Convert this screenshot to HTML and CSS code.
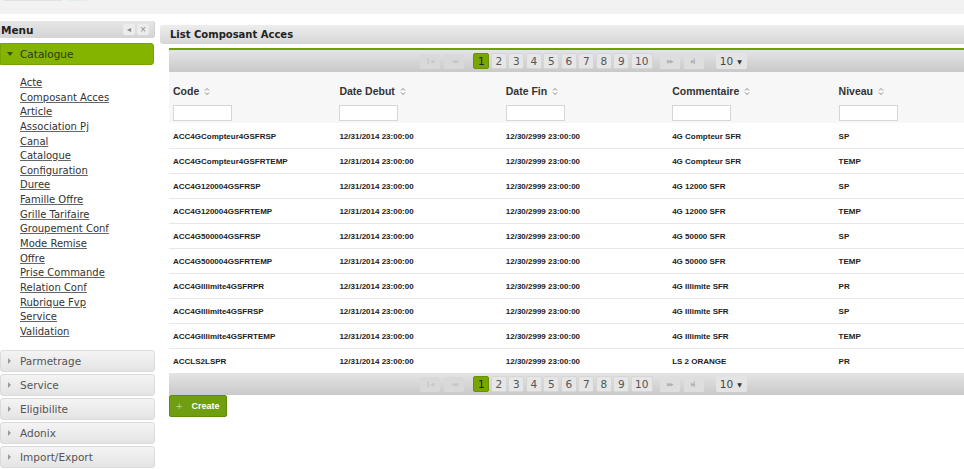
FILE: index.html
```html
<!DOCTYPE html>
<html>
<head>
<meta charset="utf-8">
<link rel="stylesheet" href="styles.css">
</head>
<body>
<div class="topbar"><span class="ghost g1"></span><span class="ghost g2"></span></div>
<div class="layout">
  <aside class="sidebar">
    <div class="menu-head">
      <span class="menu-title">Menu</span>
      <span class="menu-tools"><span class="tool">&#9666;</span><span class="tool">&#215;</span></span>
    </div>
    <div class="acc-open"><span class="tri-down"></span>Catalogue</div>
    <ul class="links">
      <li><a>Acte</a></li>
      <li><a>Composant Acces</a></li>
      <li><a>Article</a></li>
      <li><a>Association Pj</a></li>
      <li><a>Canal</a></li>
      <li><a>Catalogue</a></li>
      <li><a>Configuration</a></li>
      <li><a>Duree</a></li>
      <li><a>Famille Offre</a></li>
      <li><a>Grille Tarifaire</a></li>
      <li><a>Groupement Conf</a></li>
      <li><a>Mode Remise</a></li>
      <li><a>Offre</a></li>
      <li><a>Prise Commande</a></li>
      <li><a>Relation Conf</a></li>
      <li><a>Rubrique Fvp</a></li>
      <li><a>Service</a></li>
      <li><a>Validation</a></li>
    </ul>
    <div class="acc"><span class="tri-right"></span>Parmetrage</div>
    <div class="acc"><span class="tri-right"></span>Service</div>
    <div class="acc"><span class="tri-right"></span>Eligibilite</div>
    <div class="acc"><span class="tri-right"></span>Adonix</div>
    <div class="acc"><span class="tri-right"></span>Import/Export</div>
  </aside>
  <main class="main">
    <div class="panel-head">List Composant Acces</div>
    <div class="content">
      <div class="datatable">
        <div class="pager top">
          <span class="pbtn dis">&#9614;&#9664;</span><span class="pbtn dis">&#9664;&#9664;</span>
          <span class="pages"><span class="pg on">1</span><span class="pg">2</span><span class="pg">3</span><span class="pg">4</span><span class="pg">5</span><span class="pg">6</span><span class="pg">7</span><span class="pg">8</span><span class="pg">9</span><span class="pg wide">10</span></span>
          <span class="pbtn">&#9654;&#9654;</span><span class="pbtn">&#9654;&#9614;</span>
          <span class="rows">10 <span class="caret">&#9660;</span></span>
        </div>
        <table>
          <thead>
            <tr>
              <th><div class="th">Code <svg class="sort" viewBox="0 0 6 9" width="6" height="9"><path d="M1 3.5 L3 1.5 L5 3.5 M1 5.5 L3 7.5 L5 5.5" fill="none" stroke="#8a8a8a" stroke-width="1"/></svg></div><span class="filter"></span></th>
              <th><div class="th">Date Debut <svg class="sort" viewBox="0 0 6 9" width="6" height="9"><path d="M1 3.5 L3 1.5 L5 3.5 M1 5.5 L3 7.5 L5 5.5" fill="none" stroke="#8a8a8a" stroke-width="1"/></svg></div><span class="filter"></span></th>
              <th><div class="th">Date Fin <svg class="sort" viewBox="0 0 6 9" width="6" height="9"><path d="M1 3.5 L3 1.5 L5 3.5 M1 5.5 L3 7.5 L5 5.5" fill="none" stroke="#8a8a8a" stroke-width="1"/></svg></div><span class="filter"></span></th>
              <th><div class="th">Commentaire <svg class="sort" viewBox="0 0 6 9" width="6" height="9"><path d="M1 3.5 L3 1.5 L5 3.5 M1 5.5 L3 7.5 L5 5.5" fill="none" stroke="#8a8a8a" stroke-width="1"/></svg></div><span class="filter"></span></th>
              <th><div class="th">Niveau <svg class="sort" viewBox="0 0 6 9" width="6" height="9"><path d="M1 3.5 L3 1.5 L5 3.5 M1 5.5 L3 7.5 L5 5.5" fill="none" stroke="#8a8a8a" stroke-width="1"/></svg></div><span class="filter"></span></th>
            </tr>
          </thead>
          <tbody>
            <tr><td>ACC4GCompteur4GSFRSP</td><td>12/31/2014 23:00:00</td><td>12/30/2999 23:00:00</td><td>4G Compteur SFR</td><td>SP</td></tr>
            <tr><td>ACC4GCompteur4GSFRTEMP</td><td>12/31/2014 23:00:00</td><td>12/30/2999 23:00:00</td><td>4G Compteur SFR</td><td>TEMP</td></tr>
            <tr><td>ACC4G120004GSFRSP</td><td>12/31/2014 23:00:00</td><td>12/30/2999 23:00:00</td><td>4G 12000 SFR</td><td>SP</td></tr>
            <tr><td>ACC4G120004GSFRTEMP</td><td>12/31/2014 23:00:00</td><td>12/30/2999 23:00:00</td><td>4G 12000 SFR</td><td>TEMP</td></tr>
            <tr><td>ACC4G500004GSFRSP</td><td>12/31/2014 23:00:00</td><td>12/30/2999 23:00:00</td><td>4G 50000 SFR</td><td>SP</td></tr>
            <tr><td>ACC4G500004GSFRTEMP</td><td>12/31/2014 23:00:00</td><td>12/30/2999 23:00:00</td><td>4G 50000 SFR</td><td>TEMP</td></tr>
            <tr><td>ACC4GIllimite4GSFRPR</td><td>12/31/2014 23:00:00</td><td>12/30/2999 23:00:00</td><td>4G Illimite SFR</td><td>PR</td></tr>
            <tr><td>ACC4GIllimite4GSFRSP</td><td>12/31/2014 23:00:00</td><td>12/30/2999 23:00:00</td><td>4G Illimite SFR</td><td>SP</td></tr>
            <tr><td>ACC4GIllimite4GSFRTEMP</td><td>12/31/2014 23:00:00</td><td>12/30/2999 23:00:00</td><td>4G Illimite SFR</td><td>TEMP</td></tr>
            <tr><td>ACCLS2LSPR</td><td>12/31/2014 23:00:00</td><td>12/30/2999 23:00:00</td><td>LS 2 ORANGE</td><td>PR</td></tr>
          </tbody>
        </table>
        <div class="pager bottom">
          <span class="pbtn dis">&#9614;&#9664;</span><span class="pbtn dis">&#9664;&#9664;</span>
          <span class="pages"><span class="pg on">1</span><span class="pg">2</span><span class="pg">3</span><span class="pg">4</span><span class="pg">5</span><span class="pg">6</span><span class="pg">7</span><span class="pg">8</span><span class="pg">9</span><span class="pg wide">10</span></span>
          <span class="pbtn">&#9654;&#9654;</span><span class="pbtn">&#9654;&#9614;</span>
          <span class="rows">10 <span class="caret">&#9660;</span></span>
        </div>
      </div>
      <button class="create"><span class="plus">+</span>Create</button>
    </div>
  </main>
</div>
</body>
</html>
```
FILE: styles.css
```css
* { box-sizing: border-box; }
html, body { margin: 0; padding: 0; background: #fff; }
body {
  width: 964px; height: 469px; overflow: hidden;
  font-family: "DejaVu Sans", Verdana, sans-serif;
  color: #333;
}
.topbar { height: 14px; background: #f2f2f2; display: flex; gap: 6px; padding-left: 4px; }
.ghost { display: block; height: 1px; background: #e2e2e2; border: 0; }
.g1 { width: 58px; }
.g2 { width: 19px; background: #e4efe4; }

.layout { display: flex; align-items: flex-start; }
.sidebar { width: 155px; flex: none; padding-top: 7px; }
.menu-head {
  height: 17px; display: flex; align-items: center; justify-content: space-between;
  background: linear-gradient(#e6e6e6, #d4d4d4);
  border-radius: 0 3px 3px 0; border-right: 1px solid #d0d0d0;
  padding: 0 5px 0 1px;
}
.menu-title { font-weight: bold; font-size: 10.5px; color: #222; }
.menu-tools { display: flex; gap: 2px; }
.tool {
  width: 12px; height: 11px; background: #ececec; border-radius: 2px;
  font-size: 8px; color: #888; display: flex; align-items: center; justify-content: center; line-height: 1;
}
.acc-open {
  margin-top: 5px; height: 22px; width: 154px;
  background: #84b300; border: 1px solid #78a300; border-radius: 0 3px 3px 0;
  display: flex; align-items: center; font-size: 10.5px; color: #2d3a10;
  padding-left: 6px;
}
.tri-down { width: 0; height: 0; border-left: 3px solid transparent; border-right: 3px solid transparent; border-top: 4px solid #3d4c17; margin-right: 7px; }
.tri-right { width: 0; height: 0; border-top: 3px solid transparent; border-bottom: 3px solid transparent; border-left: 3px solid #999; margin-right: 9px; }
.links { list-style: none; margin: 0; padding: 11px 0 10px 20px; }
.links li { height: 14.65px; line-height: 14px; font-size: 10px; }
.links a { color: #333; text-decoration: underline; text-decoration-color: #666; }
.acc {
  height: 22px; margin-bottom: 2px;
  background: linear-gradient(#f4f4f4, #e4e4e4);
  border: 1px solid #dcdcdc; border-radius: 3px;
  display: flex; align-items: center; font-size: 10.5px; color: #555; padding-left: 7px;
}

.main { flex: 1; min-width: 0; margin-left: 5px; padding-top: 11px; overflow: hidden; }
.panel-head {
  height: 19px; width: 900px; display: flex; align-items: center;
  background: linear-gradient(#ededed, #d6d6d6);
  border-radius: 3px 0 0 3px; padding-left: 10px;
  font-weight: bold; font-size: 10px; color: #222;
}
.content { padding: 4px 0 0 9px; }
.datatable { width: 832px; border-top: 2px solid #6ea000; }
.pager {
  height: 22px; display: flex; align-items: center; justify-content: center;
  background: linear-gradient(#e4e4e4, #c9c9c9);
  font-size: 10px; color: #555; padding-right: 3px;
}
.pbtn {
  width: 20px; height: 15px; background: #dedede; border-radius: 2px;
  font-size: 5px; color: #b0b0b0; display: flex; align-items: center; justify-content: center; letter-spacing: -1px;
}
.pbtn + .pbtn { margin-left: 4px; }
.pbtn.dis { background: #d9d9d9; color: #c6c6c6; }
.pager .pages { display: flex; gap: 1.5px; margin: 0 7px 0 9px; }
.pg {
  width: 16px; height: 16px; background: #e6e6e6; border: 1px solid #d6d6d6; border-radius: 2px;
  display: flex; align-items: center; justify-content: center; font-size: 10.5px; color: #555;
}
.pg.wide { width: 22px; }
.pg.on { background: #78a600; border-color: #6a9200; color: #222; }
.rows {
  margin-left: 12px; width: 31px; height: 16px; background: #e4e4e4; border-radius: 2px;
  display: flex; align-items: center; padding-left: 4px; font-size: 10.5px; color: #444;
}
.caret { font-size: 6px; margin-left: 4px; color: #333; }

table { width: 100%; border-collapse: collapse; table-layout: fixed; font-family: "Liberation Sans", Arial, sans-serif; }
thead tr { background: #f7f7f7; }
th { text-align: left; padding: 11px 4px 1px; font-weight: bold; font-size: 10.5px; color: #333; vertical-align: top; height: 51px; }
.th { height: 16px; line-height: 14px; display: flex; align-items: center; }
.sort { margin-left: 5px; }
.filter { display: block; width: 59px; height: 16px; margin-top: 6px; background: #fff; border: 1px solid #d6d6d6; }
td { height: 25px; padding: 2px 4px 0; font-size: 8px; font-weight: bold; color: #222; border-bottom: 1px solid #e8e8e8; white-space: nowrap; overflow: hidden; }
tbody tr:last-child td { border-bottom: 0; }

.create {
  width: 58px; height: 22px; border: 1px solid #5d8a0a; border-radius: 2px;
  background: #6f9e10; color: #fff; font-family: "Liberation Sans", Arial, sans-serif; font-weight: bold; font-size: 9px;
  display: flex; align-items: center; padding: 0 0 0 6px; cursor: pointer;
}
.plus { color: #b6cf8a; font-weight: normal; font-size: 11px; margin-right: 9px; }
```
